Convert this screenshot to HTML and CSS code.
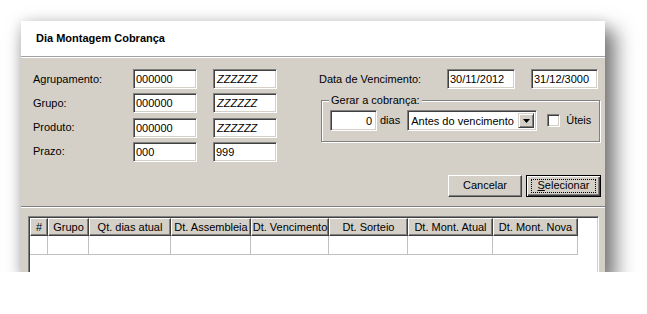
FILE: index.html
```html
<!DOCTYPE html>
<html lang="pt">
<head>
<meta charset="utf-8">
<title>Dia Montagem Cobrança</title>
<link rel="stylesheet" href="styles.css">
</head>
<body>
<div class="window">
  <div class="titlebar">Dia Montagem Cobrança</div>
  <div class="body">
    <div class="top">
      <div class="filters">
        <span class="lbl">Agrupamento:</span><span class="field">000000</span><span class="field zz">ZZZZZZ</span>
        <span class="lbl">Grupo:</span><span class="field">000000</span><span class="field zz">ZZZZZZ</span>
        <span class="lbl">Produto:</span><span class="field">000000</span><span class="field zz">ZZZZZZ</span>
        <span class="lbl">Prazo:</span><span class="field">000</span><span class="field">999</span>
      </div>
      <div class="right">
        <div class="date-row">
          <span class="lbl date-lbl">Data de Vencimento:</span>
          <span class="field date1">30/11/2012</span>
          <span class="field date2">31/12/3000</span>
        </div>
        <div class="group">
          <span class="legend">Gerar a cobrança:</span>
          <div class="group-row">
            <span class="field days">0</span>
            <span class="lbl dias">dias</span>
            <span class="select">
              <span class="select-text">Antes do vencimento</span>
              <span class="drop"><svg width="7" height="4" viewBox="0 0 7 4"><path d="M0 0h7L3.5 4z" fill="#000"/></svg></span>
            </span>
            <span class="check"></span>
            <span class="lbl uteis">Úteis</span>
          </div>
        </div>
      </div>
    </div>
    <div class="actions">
      <span class="btn">Cancelar</span>
      <span class="btn default"><span class="focus"><u>S</u>elecionar</span></span>
    </div>
  </div>
  <div class="grid-area">
    <div class="grid">
      <div class="grid-row head">
        <span class="c c1">#</span><span class="c c2">Grupo</span><span class="c c3">Qt. dias atual</span><span class="c c4">Dt. Assembleia</span><span class="c c5">Dt. Vencimento</span><span class="c c6">Dt. Sorteio</span><span class="c c7">Dt. Mont. Atual</span><span class="c c8">Dt. Mont. Nova</span>
      </div>
      <div class="grid-row data">
        <span class="c c1"></span><span class="c c2"></span><span class="c c3"></span><span class="c c4"></span><span class="c c5"></span><span class="c c6"></span><span class="c c7"></span><span class="c c8"></span>
      </div>
    </div>
  </div>
</div>
</body>
</html>
```

FILE: styles.css
```css
html, body {
  margin: 0;
  padding: 0;
  background: #fff;
}
body {
  font-family: "Liberation Sans", Arial, sans-serif;
  font-size: 11px;
  color: #000;
  padding: 21px 0 0 21px;
}
.window {
  width: 584px;
  height: 251px;
  background: #d4d0c8;
  overflow: hidden;
  box-shadow: 8px 12px 18px 3px rgba(0,0,0,0.5), 0 0 12px rgba(0,0,0,0.12);
}
.titlebar {
  height: 36px;
  box-sizing: border-box;
  background: #fff;
  font-weight: bold;
  padding: 11px 0 0 15px;
  line-height: 13px;
  border-bottom: 1px solid #a0a0a0;
  box-shadow: 0 1px 0 #fff;
  margin-bottom: 2px;
}
.body {
  padding: 10px 4px 9px 12px;
  border-bottom: 1px solid #808080;
}
.top {
  display: flex;
  align-items: flex-start;
}
.filters {
  display: grid;
  grid-template-columns: 84px 64px 64px;
  grid-auto-rows: 20px;
  column-gap: 16px;
  row-gap: 4.33px;
}
.lbl {
  align-self: center;
  line-height: 13px;
  white-space: nowrap;
}
.field {
  box-sizing: border-box;
  height: 20px;
  background: #fff;
  border-top: 1px solid #808080;
  border-left: 1px solid #808080;
  border-right: 1px solid #fff;
  border-bottom: 1px solid #fff;
  box-shadow: inset 1px 1px 0 #404040, inset -1px -1px 0 #d4d0c8;
  padding: 3px 0 0 2px;
  line-height: 13px;
  white-space: nowrap;
  overflow: hidden;
}
.zz {
  font-style: italic;
  padding-left: 3px;
}
.right {
  margin-left: 42px;
}
.date-row {
  display: flex;
  align-items: center;
  height: 20px;
}
.date-lbl {
  width: 128px;
}
.date1 { width: 68px; }
.date2 { width: 67px; margin-left: 16px; }
.group {
  position: relative;
  margin: 11px 0 0 2px;
  width: 279px;
  height: 42px;
  box-sizing: border-box;
  border: 1px solid #808080;
  box-shadow: inset 1px 1px 0 #fff, 1px 1px 0 #fff;
  padding: 9px 0 0 8px;
}
.legend {
  position: absolute;
  top: -7px;
  left: 7px;
  padding: 0 2px;
  background: #d4d0c8;
  line-height: 13px;
}
.group-row {
  display: flex;
  align-items: center;
  height: 21px;
}
.days {
  width: 47px;
  height: 21px;
  text-align: right;
  padding: 4px 4px 0 0;
}
.dias { margin-left: 3px; }
.select {
  margin-left: 7px;
  width: 130px;
  height: 21px;
  box-sizing: border-box;
  background: #fff;
  border-top: 1px solid #808080;
  border-left: 1px solid #808080;
  border-right: 1px solid #fff;
  border-bottom: 1px solid #fff;
  box-shadow: inset 1px 1px 0 #404040, inset -1px -1px 0 #d4d0c8;
  display: flex;
  padding: 2px;
}
.select-text {
  flex: 1;
  padding: 2px 0 0 1px;
  line-height: 13px;
  white-space: nowrap;
  overflow: hidden;
}
.drop {
  width: 16px;
  height: 15px;
  box-sizing: border-box;
  background: #d4d0c8;
  border-top: 1px solid #d4d0c8;
  border-left: 1px solid #d4d0c8;
  border-right: 1px solid #404040;
  border-bottom: 1px solid #404040;
  box-shadow: inset 1px 1px 0 #fff, inset -1px -1px 0 #808080;
  display: flex;
  align-items: center;
  justify-content: center;
}
.check {
  margin-left: 10px;
  width: 13px;
  height: 13px;
  box-sizing: border-box;
  background: #fff;
  border-top: 1px solid #808080;
  border-left: 1px solid #808080;
  border-right: 1px solid #fff;
  border-bottom: 1px solid #fff;
  box-shadow: inset 1px 1px 0 #404040, inset -1px -1px 0 #d4d0c8;
}
.uteis { margin-left: 6px; }
.actions {
  display: flex;
  justify-content: flex-end;
  gap: 4px;
  margin-top: 13px;
}
.btn {
  box-sizing: border-box;
  height: 22px;
  width: 74px;
  display: flex;
  align-items: center;
  justify-content: center;
  background: #d4d0c8;
  border-top: 1px solid #fff;
  border-left: 1px solid #fff;
  border-right: 1px solid #404040;
  border-bottom: 1px solid #404040;
  box-shadow: inset -1px -1px 0 #808080;
  line-height: 13px;
}
.btn.default {
  width: 75px;
  border: 1px solid #000;
  box-shadow: inset 1px 1px 0 #fff, inset -1px -1px 0 #404040, inset -2px -2px 0 #808080;
}
.focus {
  box-sizing: border-box;
  width: 65px;
  height: 14px;
  border: 1px dotted #000;
  display: flex;
  align-items: center;
  justify-content: center;
}
.grid-area {
  border-top: 1px solid #fff;
  padding: 8px 6px 0 7px;
}
.grid {
  height: 90px;
  background: #fff;
  border-top: 1px solid #808080;
  border-left: 1px solid #808080;
  border-right: 1px solid #fff;
  border-bottom: 1px solid #fff;
  box-shadow: inset 1px 1px 0 #404040, inset -1px -1px 0 #d4d0c8;
  padding: 1px;
}
.grid-row {
  display: flex;
}
.c {
  box-sizing: border-box;
  flex: none;
  line-height: 13px;
  text-align: center;
  white-space: nowrap;
  overflow: hidden;
}
.head .c {
  height: 18px;
  background: #d4d0c8;
  border-top: 1px solid #fff;
  border-left: 1px solid #fff;
  border-right: 1px solid #404040;
  border-bottom: 1px solid #404040;
  box-shadow: inset -1px -1px 0 #808080;
  padding-top: 2px;
}
.data .c {
  height: 19px;
  border-right: 1px solid #c0c0c0;
  border-bottom: 1px solid #c0c0c0;
}
.c1 { width: 18px; }
.c2 { width: 41px; }
.c3 { width: 82px; }
.c4 { width: 80px; }
.c5 { width: 78px; }
.c6 { width: 79px; }
.c7 { width: 85px; }
.c8 { width: 85px; }
```
